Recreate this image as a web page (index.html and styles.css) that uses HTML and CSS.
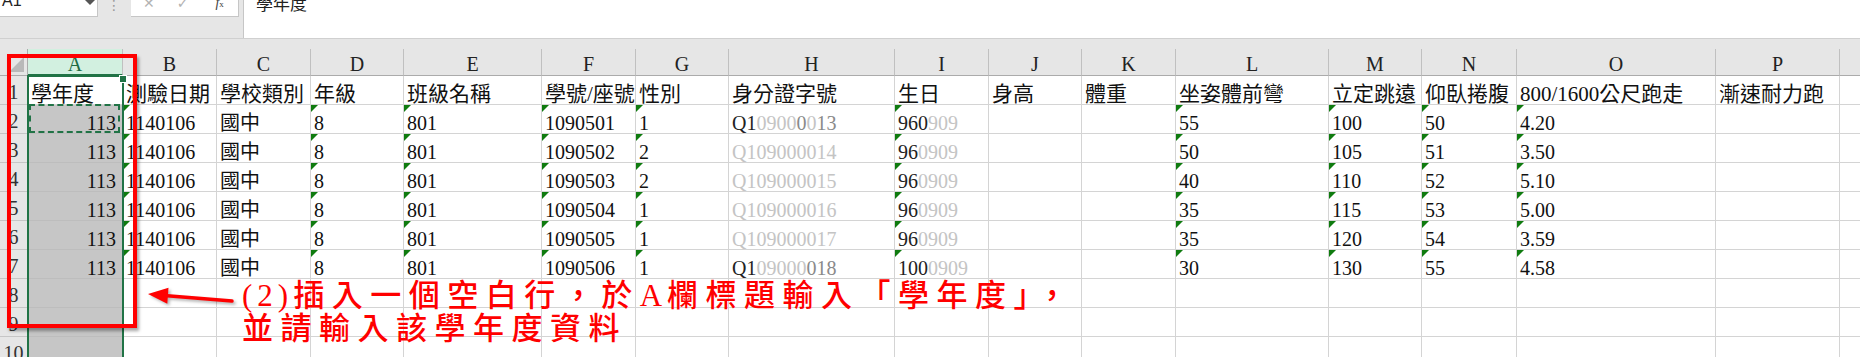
FILE: index.html
```html
<!DOCTYPE html>
<html lang="zh-Hant">
<head>
<meta charset="utf-8">
<title>Excel</title>
<link rel="stylesheet" href="styles.css">
</head>
<body>
<div class="app">
  <div class="toolbar">
    <div class="namebox"><span class="nb-text">A1</span><span class="nb-arrow"></span></div>
    <div class="dots">⋮</div>
    <div class="fxbox"><span class="ico-x">✕</span><span class="ico-ok">✓</span><span class="ico-fx"><i>f</i><span class="fxx">x</span></span></div>
    <div class="formula"><span class="formula-text">學年度</span></div>
  </div>
  <div class="gap"></div>
  <div class="sheet">
    <div class="grid">
      <!-- header row -->
      <div class="corner"><span class="corner-tri"></span></div>
      <div class="ch ch-sel">A</div><div class="ch">B</div><div class="ch">C</div><div class="ch">D</div><div class="ch">E</div><div class="ch">F</div><div class="ch">G</div><div class="ch">H</div><div class="ch">I</div><div class="ch">J</div><div class="ch">K</div><div class="ch">L</div><div class="ch">M</div><div class="ch">N</div><div class="ch">O</div><div class="ch">P</div><div class="ch"></div>
      <!-- row 1 -->
      <div class="rh">1</div>
      <div class="c h1 active">學年度</div><div class="c h1">測驗日期</div><div class="c h1">學校類別</div><div class="c h1">年級</div><div class="c h1">班級名稱</div><div class="c h1">學號/座號</div><div class="c h1">性別</div><div class="c h1">身分證字號</div><div class="c h1">生日</div><div class="c h1">身高</div><div class="c h1">體重</div><div class="c h1">坐姿體前彎</div><div class="c h1">立定跳遠</div><div class="c h1">仰臥捲腹</div><div class="c h1">800/1600公尺跑走</div><div class="c h1">漸速耐力跑</div><div class="c"></div>
      <!-- row 2 -->
      <div class="rh">2</div>
      <div class="c sel num">113</div><div class="c t">1140106</div><div class="c">國中</div><div class="c t">8</div><div class="c t">801</div><div class="c t">1090501</div><div class="c t">1</div><div class="c mask"><span class="m1">Q1</span><span class="m2">0900</span><span class="m3">0</span><span class="m2">0</span><span class="m3">13</span></div><div class="c t"><span class="m1">960</span><span class="m2">909</span></div><div class="c"></div><div class="c"></div><div class="c t">55</div><div class="c t">100</div><div class="c t">50</div><div class="c t">4.20</div><div class="c"></div><div class="c"></div>
      <!-- row 3 -->
      <div class="rh">3</div>
      <div class="c sel num">113</div><div class="c t">1140106</div><div class="c">國中</div><div class="c t">8</div><div class="c t">801</div><div class="c t">1090502</div><div class="c t">2</div><div class="c mask"><span class="m2">Q109000014</span></div><div class="c t"><span class="m1">96</span><span class="m2">0909</span></div><div class="c"></div><div class="c"></div><div class="c t">50</div><div class="c t">105</div><div class="c t">51</div><div class="c t">3.50</div><div class="c"></div><div class="c"></div>
      <!-- row 4 -->
      <div class="rh">4</div>
      <div class="c sel num">113</div><div class="c t">1140106</div><div class="c">國中</div><div class="c t">8</div><div class="c t">801</div><div class="c t">1090503</div><div class="c t">2</div><div class="c mask"><span class="m2">Q109000015</span></div><div class="c t"><span class="m1">96</span><span class="m2">0909</span></div><div class="c"></div><div class="c"></div><div class="c t">40</div><div class="c t">110</div><div class="c t">52</div><div class="c t">5.10</div><div class="c"></div><div class="c"></div>
      <!-- row 5 -->
      <div class="rh">5</div>
      <div class="c sel num">113</div><div class="c t">1140106</div><div class="c">國中</div><div class="c t">8</div><div class="c t">801</div><div class="c t">1090504</div><div class="c t">1</div><div class="c mask"><span class="m2">Q109000016</span></div><div class="c t"><span class="m1">96</span><span class="m2">0909</span></div><div class="c"></div><div class="c"></div><div class="c t">35</div><div class="c t">115</div><div class="c t">53</div><div class="c t">5.00</div><div class="c"></div><div class="c"></div>
      <!-- row 6 -->
      <div class="rh">6</div>
      <div class="c sel num">113</div><div class="c t">1140106</div><div class="c">國中</div><div class="c t">8</div><div class="c t">801</div><div class="c t">1090505</div><div class="c t">1</div><div class="c mask"><span class="m2">Q109000017</span></div><div class="c t"><span class="m1">96</span><span class="m2">0909</span></div><div class="c"></div><div class="c"></div><div class="c t">35</div><div class="c t">120</div><div class="c t">54</div><div class="c t">3.59</div><div class="c"></div><div class="c"></div>
      <!-- row 7 -->
      <div class="rh">7</div>
      <div class="c sel num">113</div><div class="c t">1140106</div><div class="c">國中</div><div class="c t">8</div><div class="c t">801</div><div class="c t">1090506</div><div class="c t">1</div><div class="c mask"><span class="m1">Q1</span><span class="m2">09000</span><span class="m3">018</span></div><div class="c t"><span class="m1">100</span><span class="m2">0909</span></div><div class="c"></div><div class="c"></div><div class="c t">30</div><div class="c t">130</div><div class="c t">55</div><div class="c t">4.58</div><div class="c"></div><div class="c"></div>
      <!-- row 8 -->
      <div class="rh">8</div>
      <div class="c sel"></div><div class="c"></div><div class="c"></div><div class="c"></div><div class="c"></div><div class="c"></div><div class="c"></div><div class="c"></div><div class="c"></div><div class="c"></div><div class="c"></div><div class="c"></div><div class="c"></div><div class="c"></div><div class="c"></div><div class="c"></div><div class="c"></div>
      <!-- row 9 -->
      <div class="rh">9</div>
      <div class="c sel"></div><div class="c"></div><div class="c"></div><div class="c"></div><div class="c"></div><div class="c"></div><div class="c"></div><div class="c"></div><div class="c"></div><div class="c"></div><div class="c"></div><div class="c"></div><div class="c"></div><div class="c"></div><div class="c"></div><div class="c"></div><div class="c"></div>
      <!-- row 10 -->
      <div class="rh">10</div>
      <div class="c sel"></div><div class="c"></div><div class="c"></div><div class="c"></div><div class="c"></div><div class="c"></div><div class="c"></div><div class="c"></div><div class="c"></div><div class="c"></div><div class="c"></div><div class="c"></div><div class="c"></div><div class="c"></div><div class="c"></div><div class="c"></div><div class="c"></div>
    </div>

    <!-- selection overlays -->
    <div class="sel-border"><span class="fill-handle"></span></div>
    <div class="copy-marquee"></div>

    <!-- annotation overlays -->
    <div class="red-box"></div>
    <svg class="arrow" width="100" height="40" viewBox="0 0 100 40">
      <line x1="88" y1="25" x2="20" y2="19.5" stroke="#ff0000" stroke-width="3.5" stroke-linecap="round"/>
      <polygon points="4,18 24.5,11.7 23.3,27.7" fill="#ff0000"/>
    </svg>
    <div class="note">
      <div class="note-line"><span class="lat">(2)</span>插入一個空白行，於<span class="lat">A</span>欄標題輸入「學年度」，</div>
      <div class="note-line">並請輸入該學年度資料</div>
    </div>
  </div>
</div>
</body>
</html>
```
FILE: styles.css
```css
html, body {
  margin: 0;
  padding: 0;
}
body {
  width: 1860px;
  height: 357px;
  overflow: hidden;
  background: #e6e6e6;
  font-family: "Liberation Serif", "Noto Sans CJK TC", serif;
}
.app {
  width: 1860px;
  height: 357px;
  overflow: hidden;
  position: relative;
}

/* ---------- toolbar ---------- */
.toolbar {
  height: 38px;
  display: flex;
  align-items: flex-start;
  background: #e6e6e6;
  border-bottom: 1px solid #d0d0d0;
  box-sizing: content-box;
}
.namebox {
  width: 97px;
  height: 16px;
  background: #fff;
  border-right: 1px solid #c6c6c6;
  border-bottom: 1px solid #c6c6c6;
  position: relative;
  overflow: hidden;
}
.nb-text {
  position: absolute;
  left: 2px;
  top: -9px;
  font-family: "Liberation Sans", sans-serif;
  font-size: 16px;
  line-height: 20px;
  color: #222;
}
.nb-arrow {
  position: absolute;
  left: 85px;
  top: 0;
  width: 0;
  height: 0;
  border-left: 5px solid transparent;
  border-right: 5px solid transparent;
  border-top: 5px solid #555;
}
.dots {
  width: 32px;
  text-align: center;
  color: #9a9a9a;
  font-family: "DejaVu Sans", sans-serif;
  font-size: 14px;
  line-height: 14px;
  margin-top: -2px;
}
.fxbox {
  width: 107px;
  height: 16px;
  background: #fff;
  border-right: 1px solid #c6c6c6;
  border-bottom: 1px solid #c6c6c6;
  display: flex;
  align-items: flex-start;
  overflow: hidden;
  margin-left: 1px;
}
.ico-x, .ico-ok {
  font-family: "DejaVu Sans", sans-serif;
  color: #b3b3b3;
  font-size: 14px;
  line-height: 10px;
  margin-top: -2px;
}
.ico-x { margin-left: 12px; }
.ico-ok { margin-left: 22px; }
.ico-fx {
  margin-left: 27px;
  margin-top: -4px;
  font-family: "Liberation Serif", serif;
  font-size: 14px;
  line-height: 14px;
  color: #444;
}
.ico-fx i { font-style: italic; }
.fxx { font-size: 9px; }
.formula {
  flex: 1;
  height: 38px;
  margin-left: 4px;
  background: #fff;
  border-left: 1px solid #c6c6c6;
  box-sizing: border-box;
  position: relative;
  overflow: hidden;
}
.formula-text {
  position: absolute;
  left: 12px;
  top: -7px;
  font-family: "Noto Sans CJK TC", sans-serif;
  font-size: 17px;
  line-height: 20px;
  color: #222;
}
.gap {
  height: 10px;
  background: #e6e6e6;
}

/* ---------- sheet ---------- */
.sheet {
  position: relative;
  background: #fff;
}
.grid {
  display: grid;
  grid-template-columns: 28px 95px 94px 94px 93px 138px 94px 93px 166px 94px 93px 94px 153px 93px 95px 199px 124px 40px;
  grid-template-rows: 27px repeat(10, 29px);
}
.corner {
  background: #e6e6e6;
  border-right: 1px solid #ababab;
  border-bottom: 1px solid #ababab;
  box-sizing: border-box;
  position: relative;
}
.corner-tri {
  position: absolute;
  right: 3px;
  bottom: 3px;
  width: 0;
  height: 0;
  border-left: 15px solid transparent;
  border-bottom: 15px solid #b9b9b9;
}
.ch {
  background: #e6e6e6;
  border-right: 1px solid #c0c0c0;
  border-bottom: 1px solid #ababab;
  box-sizing: border-box;
  text-align: center;
  font-size: 20px;
  line-height: 30px;
  color: #222;
}
.ch-sel {
  background: #d2f0e0;
  color: #1e6b43;
  border-bottom: 2px solid #217346;
}
.rh {
  background: #e6e6e6;
  border-right: 1px solid #ababab;
  border-bottom: 1px solid #c6c6c6;
  box-sizing: border-box;
  text-align: center;
  font-size: 20px;
  line-height: 32px;
  color: #333;
  overflow: hidden;
}
.c {
  border-right: 1px solid #d4d4d4;
  border-bottom: 1px solid #d4d4d4;
  box-sizing: border-box;
  display: flex;
  align-items: flex-end;
  padding: 0 3px;
  overflow: hidden;
  white-space: nowrap;
  font-size: 20px;
  line-height: 20px;
  color: #111;
  position: relative;
}
.c.h1 {
  font-size: 21px;
}
.c.num {
  justify-content: flex-end;
  padding-right: 6px;
}
.c.sel {
  background: #c6c6c6;
  border-bottom-color: #bdbdbd;
  border-right-color: #c6c6c6;
}
.c.active {
  background: #fff;
}
.c.t::before {
  content: "";
  position: absolute;
  left: 0;
  top: 0;
  width: 0;
  height: 0;
  border-top: 7px solid #0f7b0f;
  border-right: 7px solid transparent;
}
.c.mask {
  padding-left: 3px;
}
.m1 { color: #222; }
.m2 { color: #c4c4c4; }
.m3 { color: #8a8a8a; }

/* selection */
.sel-border {
  position: absolute;
  left: 27px;
  top: 26px;
  width: 93px;
  height: 320px;
  border-left: 2px solid #217346;
  border-right: 2px solid #217346;
  border-top: 2px solid #217346;
}
.fill-handle {
  position: absolute;
  right: -5px;
  top: -2px;
  width: 6px;
  height: 6px;
  background: #217346;
  border: 1px solid #fff;
}
.copy-marquee {
  position: absolute;
  left: 29px;
  top: 55px;
  width: 91px;
  height: 29px;
  border: 2px dashed #217346;
  box-sizing: border-box;
}

/* annotation */
.red-box {
  position: absolute;
  left: 7px;
  top: 5px;
  width: 130px;
  height: 274px;
  border: 4px solid #ff0000;
  box-sizing: border-box;
  box-shadow: 2px 3px 3px rgba(0, 0, 0, 0.35);
}
.arrow {
  position: absolute;
  left: 144px;
  top: 227px;
  filter: drop-shadow(2px 2px 1.5px rgba(0, 0, 0, 0.3));
}
.note {
  position: absolute;
  left: 242px;
  top: 230px;
  color: #ff0000;
  font-family: "Liberation Serif", "Noto Sans CJK TC", serif;
  font-size: 31px;
  line-height: 33px;
  letter-spacing: 7.5px;
  font-weight: 500;
  white-space: nowrap;
}
.note .lat {
  letter-spacing: 5px;
}
```
